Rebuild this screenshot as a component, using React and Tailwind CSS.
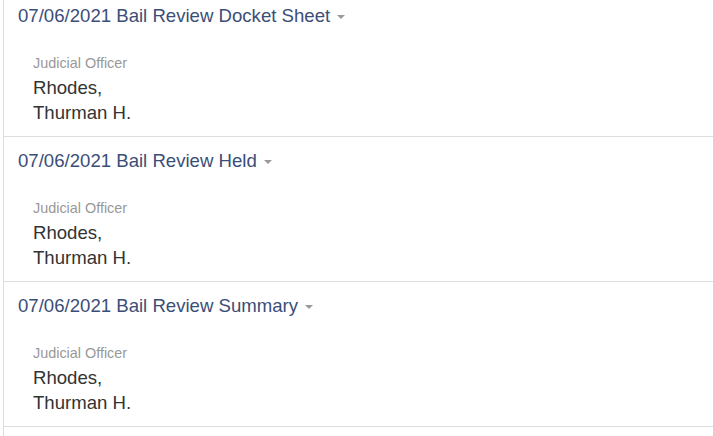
const entries = [
  { id: 1, date: '07/06/2021', title: 'Bail Review Docket Sheet', officer: ['Rhodes,', 'Thurman H.'] },
  { id: 2, date: '07/06/2021', title: 'Bail Review Held', officer: ['Rhodes,', 'Thurman H.'] },
  { id: 3, date: '07/06/2021', title: 'Bail Review Summary', officer: ['Rhodes,', 'Thurman H.'] },
];

const Caret = () => (
  <svg width="8" height="4" viewBox="0 0 8 4" className="ml-[7px] mt-[3px] shrink-0">
    <path d="M0 0 H8 L4 4 Z" fill="#9a9a9a" />
  </svg>
);

const DocketEntry = ({ entry }) => (
  <div className="border-t border-[#dddddd] pt-[11px] pb-[11px] pl-[14px]">
    <div className="flex items-center h-[25px] text-[18.6px] leading-[25px] text-[#3b4e77]">
      <span>
        {entry.date} {entry.title}
      </span>
      <Caret />
    </div>
    <div className="mt-[23px] pl-[15px]">
      <div className="text-[14.4px] leading-[24px] text-[#999999]">Judicial Officer</div>
      {entry.officer.map((line) => (
        <div key={line} className="text-[18.6px] leading-[25px] text-[#333333]">
          {line}
        </div>
      ))}
    </div>
  </div>
);

const App = () => {
  return (
    <div
      className="w-[713px] h-[436px] overflow-hidden bg-white"
      style={{ fontFamily: '"Liberation Sans", Arial, sans-serif' }}
    >
      <div className="ml-[3px] -mt-[9px] border-l border-[#dddddd]">
        {entries.map((entry) => (
          <DocketEntry key={entry.id} entry={entry} />
        ))}
        <div className="border-t border-[#dddddd] h-[40px]" />
      </div>
    </div>
  );
};

export default App;
